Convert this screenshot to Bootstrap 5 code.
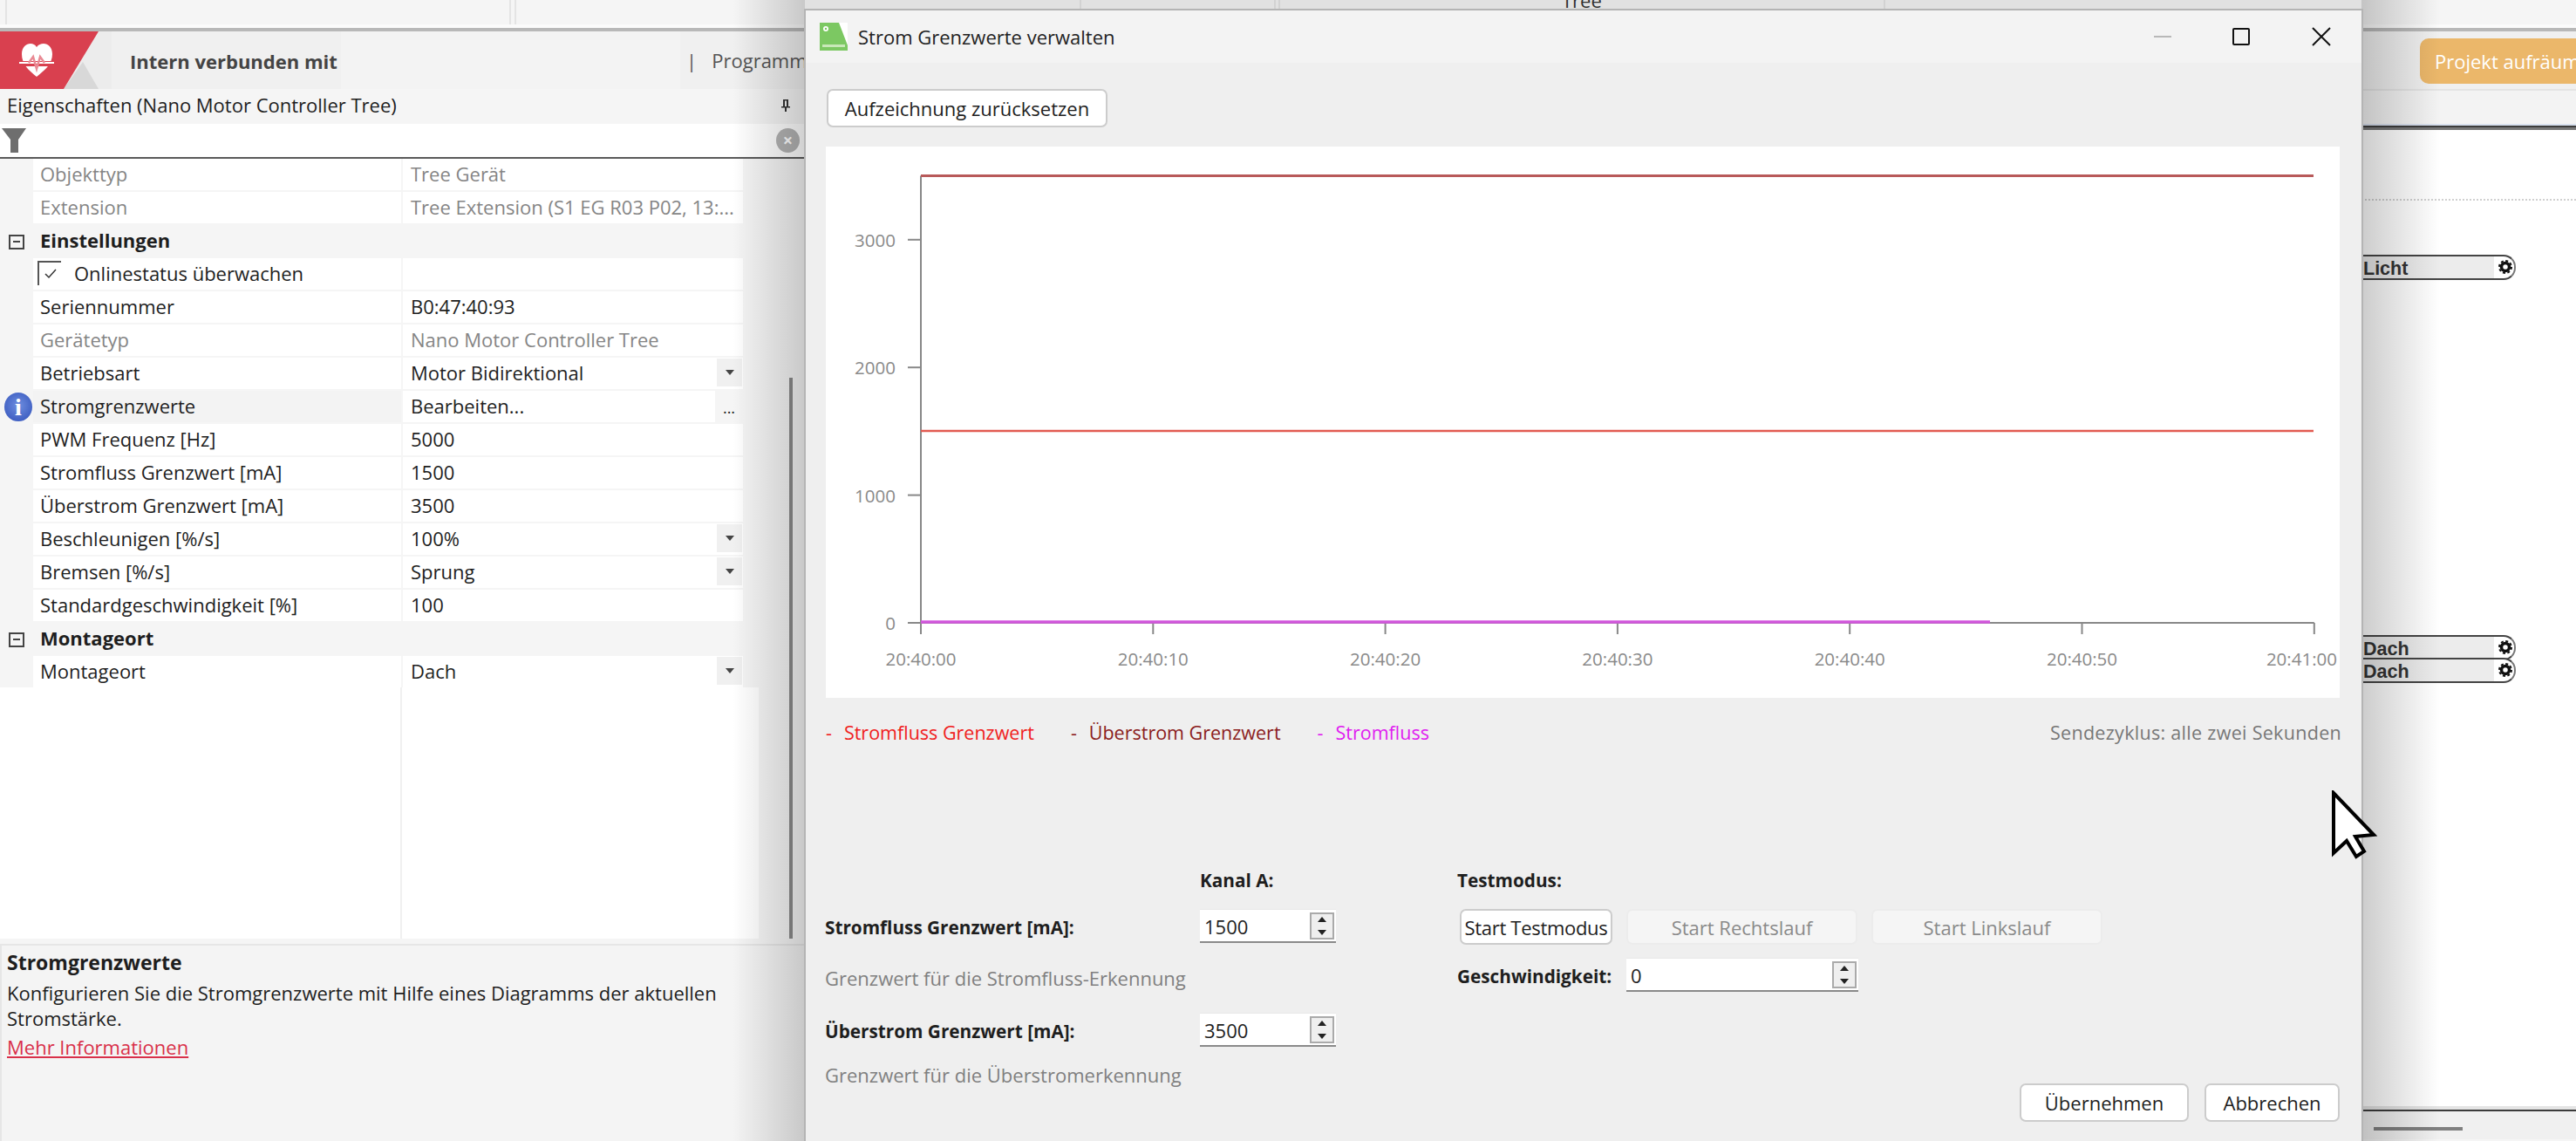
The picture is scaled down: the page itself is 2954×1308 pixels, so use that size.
<!DOCTYPE html>
<html lang="de">
<head>
  <meta charset="UTF-8">
  <title>Strom Grenzwerte verwalten</title>
  <link href="https://cdn.jsdelivr.net/npm/bootstrap@5.3.0/dist/css/bootstrap.min.css" rel="stylesheet">
  <style>
    html, body { height: 100%; overflow: hidden; }
    body {
      background: #f5f5f5;
      font-family: "Open Sans", "Liberation Sans", sans-serif;
      font-size: 22px;
      color: #1e1e1e;
      line-height: 1.2;
      position: relative;
    }
    .top-strip { height: 36px; background: #f5f5f5; border-bottom: 4px solid #b8b8b8; position: relative; overflow: hidden; }
    .strip-cell { height: 28px; border-right: 2px solid #e4e4e4; }
    .strip-glow { position: absolute; left: 0; right: 0; top: 28px; height: 4px; background: #fbfbfb; }
    .strip-text { position: absolute; left: 1791px; top: -13px; color: #333; }
    .head-row { height: 66px; background: #f3f3f3; }
    .logo-box { width: 128px; height: 66px; flex: none; }
    .head-title { width: 263px; height: 66px; flex: none; background: #f0f0f0; padding: 2px 0 0 21px; font-weight: 700; color: #444; white-space: nowrap; }
    .head-gap { width: 389px; flex: none; }
    .head-prog { flex: 1; padding-left: 7px; color: #555; white-space: nowrap; overflow: hidden; background: #f0f0f0; height: 66px; }
    .head-btn { position: absolute; left: 2775px; top: 44px; width: 220px; height: 52px; background: #ebb76a; color: #fff; border-radius: 10px; padding-left: 17px; white-space: nowrap; }

    .left-pane { width: 923px; height: 1206px; flex: none; }
    .pane-title { height: 40px; padding: 0 8px 3px; }
    .filter-row { height: 40px; background: #fff; border-bottom: 2px solid #5a5a5a; padding: 0 6px 0 2px; }
    .clear-dot { width: 27px; height: 28px; border-radius: 50%; background: #b4b4b4; color: #fff; font-weight: 700; font-size: 20px; line-height: 27px; text-align: center; }
    .prop-area { height: 606px; background: #f5f5f5; }
    .prop-row { height: 38px; width: 852px; padding-bottom: 2px; }
    .prop-key { width: 422px; margin-left: 38px; padding: 0 0 2px 8px; background: #fff; flex: none; height: 36px; margin-right: 2px; white-space: nowrap; }
    .prop-key.is-plain { background: #f3f3f3; }
    .prop-val { flex: 1; background: #fff; padding: 0 0 2px 9px; height: 36px; min-width: 0; white-space: nowrap; }
    .is-off { color: #858585; }
    .group-row { height: 38px; width: 852px; font-weight: 700; padding-bottom: 3px; }
    .minus-box { width: 18px; height: 17px; border: 2px solid #444; margin: 3px 18px 0 10px; position: relative; flex: none; }
    .minus-box::after { content: ""; position: absolute; left: 3px; right: 3px; top: 5px; height: 2px; background: #444; }
    .combo-btn { width: 29px; height: 32px; background: #f0f0f0; margin-right: 1px; flex: none; }
    .combo-btn::after { content: ""; border: 5px solid transparent; border-top: 6px solid #444; border-bottom: 0; }
    .dots-btn { width: 32px; background: #f5f5f5; flex: none; height: 36px; font-size: 18px; padding-top: 9px; }
    .check-mark { width: 27px; height: 28px; border-left: 2px solid #555; border-top: 2px solid #555; margin: 0 15px 0 -3px; flex: none; }
    .info-dot { position: absolute; left: 5px; top: 2px; width: 32px; height: 33px; border-radius: 50%; background: radial-gradient(circle at 50% 45%, #6f8fe0, #2f4fb8); color: #fff; text-align: center; font: 700 28px/33px "Liberation Serif", serif; }
    .blank-area { height: 288px; width: 870px; background: #fff; }
    .blank-area-left { width: 461px; height: 288px; border-right: 2px solid #f0f0f0; }
    .desc-box { height: 226px; border-top: 2px solid #e6e6e6; border-left: 2px solid #e6e6e6; margin-top: 6px; padding: 5px 6px; background: #f4f4f4; line-height: 29px; white-space: nowrap; }
    .desc-box a { color: #d9304a; }
    .desc-title { font-weight: 700; font-size: 23px; margin-bottom: 6px; }
    .scroll-thumb { position: absolute; left: 905px; top: 433px; width: 4px; height: 643px; background: #8a8a8a; }

    .right-pane { flex: 1; min-width: 0; }
    .right-band { height: 42px; border-top: 2px solid #e4e4e4; background: #f3f3f3; }
    .right-rule { height: 5px; background: #777; border-top: 2px solid #3c3c3c; box-shadow: 0 -2px 0 #d8e0ee; }
    .right-canvas { height: 1123px; background: #fff; }
    .right-foot { height: 34px; background: #f0f0f0; border-top: 2px solid #3c3c3c; box-shadow: 0 -4px 0 #e4e4e4; }
    .dot-line { position: absolute; left: 2708px; right: 0; top: 228px; border-top: 2px dotted #d0d0d0; }
    .map-node { position: absolute; left: 2704px; width: 181px; height: 29px; background: linear-gradient(90deg, #ececec 156px, #fff 156px); border: 2px solid #444; border-left: 0; border-right-color: #777; border-radius: 0 14px 14px 0; padding-left: 6px; font: 700 21.5px/28px "Liberation Sans", sans-serif; color: #333; }
    .map-node svg { position: absolute; right: 1px; top: 3px; }
    .h-thumb { position: absolute; left: 2722px; top: 1292px; width: 102px; height: 4px; background: #808080; }
    .shade-left { position: absolute; left: 840px; top: 0; width: 83px; bottom: 0; background: linear-gradient(90deg, rgba(0,0,0,0), rgba(0,0,0,.18)); }
    .shade-top { position: absolute; left: 923px; top: 0; width: 1785px; height: 10px; background: rgba(0,0,0,.08); }
    .shade-right { position: absolute; left: 2708px; top: 0; width: 90px; bottom: 0; background: linear-gradient(90deg, rgba(0,0,0,.2), rgba(0,0,0,0)); }

    .dlg { position: absolute; left: 922px; top: 10px; width: 1788px; height: 1298px; background: #efefef; border: 2px solid #b4b4b4; border-bottom: 0; }
    .dlg-head { height: 60px; background: #f3f3f3; padding-left: 16px; }
    .dlg-title { color: #222; margin-left: 12px; }
    .win-btns { margin-left: auto; }
    .win-min { width: 20px; height: 2px; background: #b8b8b8; margin-right: 70px; }
    .win-max { width: 20px; height: 20px; border: 2px solid #111; border-radius: 2px; margin-right: 71px; }
    .win-close { margin-right: 35px; }
    .dlg-body { padding: 30px 24px 0; }
    .win-btn { background: #fff; border: 2px solid #ccc; border-radius: 7px; color: #1e1e1e; font-size: 22px; line-height: 1; padding: 0; height: 44px; white-space: nowrap; }
    .win-btn:disabled { background: #f5f5f5; border-color: #ececec; color: #8a8a8a; opacity: 1; }
    .btn-reset { width: 322px; }
    .btn-test { height: 41px; }
    .btn-start { width: 175px; letter-spacing: -0.3px; }
    .btn-run { width: 265px; }
    .btn-apply { width: 194px; }
    .btn-cancel { width: 155px; }
    .chart-box { width: 1736px; height: 632px; background: #fff; margin-top: 22px; margin-left: -1px; }
    .chart-box svg { display: block; }
    .chart-box text { font-family: "Open Sans", sans-serif; font-size: 20.5px; fill: #8a8a8a; }
    .legend-row { height: 80px; padding-top: 27px; margin-left: -1px; width: 1738px; font-size: 21.5px; }
    .legend-item { margin-right: 42px; }
    .legend-dash { margin-right: 14px; }
    .tone-red { color: #f02020; }
    .tone-brown { color: #8b2020; }
    .tone-pink { color: #e020f0; }
    .cycle-note { margin-left: auto; color: #777; letter-spacing: .3px; }
    .low-part { margin: 117px 0 0 -2px; width: 1738px; }
    .low-head { height: 46px; font-weight: 700; font-size: 20.75px; }
    .head-gap-a { width: 295px; }
    .lim-col { width: 430px; flex: none; }
    .lim-label { font-weight: 700; font-size: 20.75px; white-space: nowrap; padding-top: 2px; }
    .lim-hint { color: #808080; height: 81px; }
    .lim-hint-last { height: 64px; }
    .lim-row { height: 38px; }
    .spin-box { position: relative; height: 38px; background: #fff; border-bottom: 2px solid #8a8a8a; box-shadow: 0 -1px 0 #e8e8e8; padding-left: 5px; line-height: 38px; flex: none; }
    .spin-ctl { position: absolute; right: 2px; top: 3px; width: 28px; height: 31px; border: 2px solid #aaa; background: #efefef; }
    .spin-ctl::before, .spin-ctl::after { content: ""; position: absolute; left: 7px; border: 5px solid transparent; }
    .spin-ctl::before { top: 3px; border-bottom: 6px solid #222; border-top: 0; }
    .spin-ctl::after { bottom: 3px; border-top: 6px solid #222; border-bottom: 0; }
    .spin-small { width: 156px; }
    .spin-wide { width: 266px; }
    .test-col { margin: -1px 0 0 142px; }
    .speed-row { margin-left: -3px; }
    .speed-label { width: 194px; }
    .foot-btns { position: absolute; right: 25px; top: 1230px; gap: 18px; }
    .pointer-mark { position: absolute; left: 2672px; top: 906px; }
  </style>
</head>
<body>
  <div class="top-strip d-flex">
    <div class="strip-cell" style="width:8px"></div>
    <div class="strip-cell" style="width:578px"></div>
    <div class="strip-cell" style="width:6px"></div>
    <div class="strip-cell" style="width:648px"></div>
    <div class="strip-cell" style="width:223px"></div>
    <div class="strip-cell" style="width:5px"></div>
    <div class="strip-cell" style="width:694px"></div>
    <div class="strip-glow"></div>
    <div class="strip-text">Tree</div>
  </div>
  <div class="head-row d-flex align-items-center">
    <div class="logo-box">
      <svg width="128" height="66" viewBox="0 0 128 66">
        <path d="M0 0H128V66H0Z" fill="#ececec"/>
        <path d="M95 35L113 66H73Z" fill="#d8d8d8"/>
        <path d="M0 0H113L73 66H0Z" fill="#d9404f"/>
        <path d="M42 52C32 44 25 37 25 26C25 18 30 14 35 14C38 14 40 15 42 18C44 15 47 14 50 14C55 14 60 18 60 26C60 37 52 44 42 52Z" fill="#fff"/>
        <path d="M20 37H64" stroke="#d9404f" stroke-width="6"/>
        <path d="M22 36H62" stroke="#fff" stroke-width="2"/>
        <path d="M33 36L38 29L42 43L46 29L51 36" fill="none" stroke="#e98a94" stroke-width="2.500"/>
      </svg>
    </div>
    <div class="head-title d-flex align-items-center">Intern verbunden mit</div>
    <div class="head-gap"></div>
    <div class="head-prog d-flex align-items-center">|&nbsp;&nbsp;&nbsp;Programmierung</div>
  </div>
  <div class="head-btn d-flex align-items-center">Projekt aufräumen</div>

  <div class="d-flex">
    <div class="left-pane">
      <div class="pane-title d-flex align-items-center justify-content-between">
        <span>Eigenschaften (Nano Motor Controller Tree)</span>
        <svg width="12" height="16" viewBox="0 0 12 16" class="me-2"><path d="M3 1H9V9H11V10.500H7V15H5V10.500H1V9H3ZM5 2.500V9H7V2.500Z" fill="#333"/></svg>
      </div>
      <div class="filter-row d-flex align-items-center justify-content-between">
        <svg width="28" height="30" viewBox="0 0 28 30"><path d="M0 1H28L19 14V29H10V14Z" fill="#6e6e6e"/></svg>
        <div class="clear-dot">×</div>
      </div>
      <div class="prop-area" id="props"></div>
      <div class="blank-area"><div class="blank-area-left"></div></div>
      <div class="desc-box">
        <div class="desc-title">Stromgrenzwerte</div>
        <div>Konfigurieren Sie die Stromgrenzwerte mit Hilfe eines Diagramms der aktuellen<br>Stromstärke.</div>
        <a href="#" class="d-block mt-1">Mehr Informationen</a>
      </div>
    </div>
    <div class="right-pane">
      <div class="right-band"></div>
      <div class="right-rule"></div>
      <div class="right-canvas"></div>
      <div class="right-foot"></div>
    </div>
  </div>

  <div class="scroll-thumb"></div>
  <div class="dot-line"></div>
  <div class="map-node" style="top:292px">Licht<svg width="18" height="18" viewBox="0 0 18 18"><circle cx="9" cy="9" r="4.500" fill="#fff" stroke="#111" stroke-width="3.500"/><circle cx="9" cy="9" r="7" fill="none" stroke="#111" stroke-width="2" stroke-dasharray="3 2.500"/></svg></div>
  <div class="map-node" style="top:728px">Dach<svg width="18" height="18" viewBox="0 0 18 18"><circle cx="9" cy="9" r="4.500" fill="#fff" stroke="#111" stroke-width="3.500"/><circle cx="9" cy="9" r="7" fill="none" stroke="#111" stroke-width="2" stroke-dasharray="3 2.500"/></svg></div>
  <div class="map-node" style="top:754px">Dach<svg width="18" height="18" viewBox="0 0 18 18"><circle cx="9" cy="9" r="4.500" fill="#fff" stroke="#111" stroke-width="3.500"/><circle cx="9" cy="9" r="7" fill="none" stroke="#111" stroke-width="2" stroke-dasharray="3 2.500"/></svg></div>
  <div class="h-thumb"></div>
  <div class="shade-left"></div>
  <div class="shade-top"></div>
  <div class="shade-right"></div>

  <div class="dlg">
    <div class="dlg-head d-flex align-items-center">
      <svg width="32" height="32" viewBox="0 0 32 32">
        <path d="M0 0H32V32H0Z" fill="#7cc862"/>
        <path d="M22 0H32V26Z" fill="#fff"/>
        <circle cx="7" cy="7" r="3" fill="#fff"/><circle cx="7" cy="7" r="1.200" fill="#7cc862"/>
        <path d="M3 25H29V28H3Z" fill="#c8e8b8"/>
      </svg>
      <div class="dlg-title">Strom Grenzwerte verwalten</div>
      <div class="win-btns d-flex align-items-center">
        <div class="win-min"></div>
        <div class="win-max"></div>
        <svg width="22" height="22" viewBox="0 0 22 22" class="win-close"><path d="M1 1L21 21M21 1L1 21" stroke="#111" stroke-width="2"/></svg>
      </div>
    </div>
    <div class="dlg-body">
      <button class="btn win-btn btn-reset d-block">Aufzeichnung zurücksetzen</button>
      <div class="chart-box"><svg id="chart" width="1736" height="632" viewBox="948 168 1736 632"></svg></div>
      <div class="legend-row d-flex">
        <div class="legend-item tone-red"><span class="legend-dash">-</span>Stromfluss Grenzwert</div>
        <div class="legend-item tone-brown"><span class="legend-dash">-</span>Überstrom Grenzwert</div>
        <div class="legend-item tone-pink"><span class="legend-dash">-</span>Stromfluss</div>
        <div class="cycle-note">Sendezyklus: alle zwei Sekunden</div>
      </div>
      <div class="low-part">
        <div class="low-head d-flex">
          <div class="lim-col"></div>
          <div class="head-gap-a">Kanal A:</div>
          <div>Testmodus:</div>
        </div>
        <div class="d-flex">
          <div>
            <div class="lim-row d-flex align-items-center">
              <div class="lim-label lim-col">Stromfluss Grenzwert [mA]:</div>
              <div class="spin-box spin-small">1500<span class="spin-ctl"></span></div>
            </div>
            <div class="lim-hint d-flex align-items-center">Grenzwert für die Stromfluss-Erkennung</div>
            <div class="lim-row d-flex align-items-center">
              <div class="lim-label lim-col">Überstrom Grenzwert [mA]:</div>
              <div class="spin-box spin-small">3500<span class="spin-ctl"></span></div>
            </div>
            <div class="lim-hint lim-hint-last d-flex align-items-center">Grenzwert für die Überstromerkennung</div>
          </div>
          <div class="test-col">
            <div class="d-flex gap-3">
              <button class="btn win-btn btn-test btn-start">Start Testmodus</button>
              <button class="btn win-btn btn-test btn-run" disabled>Start Rechtslauf</button>
              <button class="btn win-btn btn-test btn-run" disabled>Start Linkslauf</button>
            </div>
            <div class="speed-row d-flex align-items-center mt-3">
              <div class="lim-label speed-label">Geschwindigkeit:</div>
              <div class="spin-box spin-wide">0<span class="spin-ctl"></span></div>
            </div>
          </div>
        </div>
      </div>
      <div class="foot-btns d-flex">
        <button class="btn win-btn btn-apply">Übernehmen</button>
        <button class="btn win-btn btn-cancel">Abbrechen</button>
      </div>
    </div>
  </div>

  <svg class="pointer-mark" width="56" height="80" viewBox="0 0 56 80">
    <path d="M4 3V72L19 58L30 76L39 70L29 53L50 51Z" fill="#fff" stroke="#000" stroke-width="4" stroke-linejoin="miter"/>
  </svg>

  <script>
    const rows = [
      { key: 'Objekttyp', val: 'Tree Gerät', off: true },
      { key: 'Extension', val: 'Tree Extension (S1 EG R03 P02, 13:...', off: true },
      { group: 'Einstellungen' },
      { key: 'Onlinestatus überwachen', val: '', check: true },
      { key: 'Seriennummer', val: 'B0:47:40:93' },
      { key: 'Gerätetyp', val: 'Nano Motor Controller Tree', off: true },
      { key: 'Betriebsart', val: 'Motor Bidirektional', combo: true },
      { key: 'Stromgrenzwerte', val: 'Bearbeiten...', dots: true },
      { key: 'PWM Frequenz [Hz]', val: '5000' },
      { key: 'Stromfluss Grenzwert [mA]', val: '1500' },
      { key: 'Überstrom Grenzwert [mA]', val: '3500' },
      { key: 'Beschleunigen [%/s]', val: '100%', combo: true },
      { key: 'Bremsen [%/s]', val: 'Sprung', combo: true },
      { key: 'Standardgeschwindigkeit [%]', val: '100' },
      { group: 'Montageort' },
      { key: 'Montageort', val: 'Dach', combo: true }
    ];

    document.getElementById('props').innerHTML = rows.map(r => {
      if (r.group) {
        return `<div class="group-row d-flex align-items-center"><span class="minus-box"></span>${r.group}</div>`;
      }
      const check = r.check ? `
        <span class="check-mark d-flex align-items-center justify-content-center">
          <svg width="14" height="12" viewBox="0 0 14 12"><path d="M1 6L5 10L13 1" fill="none" stroke="#333" stroke-width="1.500"/></svg>
        </span>` : '';
      return `
        <div class="prop-row d-flex position-relative ${r.off ? 'is-off' : ''}">
          ${r.dots ? '<span class="info-dot">i</span>' : ''}
          <div class="prop-key d-flex align-items-center ${r.dots ? 'is-plain' : ''}">${check}${r.key}</div>
          <div class="prop-val d-flex align-items-center">${r.val}
            ${r.combo ? '<span class="combo-btn ms-auto d-flex align-items-center justify-content-center"></span>' : ''}
          </div>
          ${r.dots ? '<div class="dots-btn d-flex justify-content-center">...</div>' : ''}
        </div>`;
    }).join('');

    // chart in screen coordinates, viewBox is the white box of the reference
    const y0 = 714, perK = 146.4, x0 = 1057, step = 266.3;
    const labels = ['20:40:00', '20:40:10', '20:40:20', '20:40:30', '20:40:40', '20:40:50', '20:41:00'];
    let svg = `<path d="M${x0} ${y0 - 3500 * perK / 1000}V${y0 + 13}" stroke="#888" stroke-width="2" fill="none"/>`;
    svg += `<path d="M${x0 - 15} ${y0}H${x0 + 6 * step}" stroke="#888" stroke-width="2" fill="none"/>`;
    [1000, 2000, 3000, 0].forEach(v => {
      const y = y0 - v * perK / 1000;
      svg += `<path d="M${x0 - 15} ${y}H${x0}" stroke="#888" stroke-width="2"/>`;
      svg += `<text x="1028" y="${y + 8}" text-anchor="end">${v}</text>`;
    });
    labels.forEach((t, i) => {
      const x = x0 + i * step;
      svg += `<path d="M${x} ${y0}V${y0 + 13}" stroke="#888" stroke-width="2"/>`;
      svg += `<text x="${i === 6 ? 2681 : x}" y="763" text-anchor="${i === 6 ? 'end' : 'middle'}">${t}</text>`;
    });
    svg += `<path d="M${x0} 201.500H2654" stroke="#b85a5a" stroke-width="3"/>`;
    svg += `<path d="M${x0} 494H2654" stroke="#e25a50" stroke-width="2.500"/>`;
    svg += `<path d="M${x0} 713H2283" stroke="#d257dc" stroke-width="3.500"/>`;
    document.getElementById('chart').innerHTML = svg;
  </script>
  <script src="https://cdn.jsdelivr.net/npm/bootstrap@5.3.0/dist/js/bootstrap.bundle.min.js"></script>
</body>
</html>
